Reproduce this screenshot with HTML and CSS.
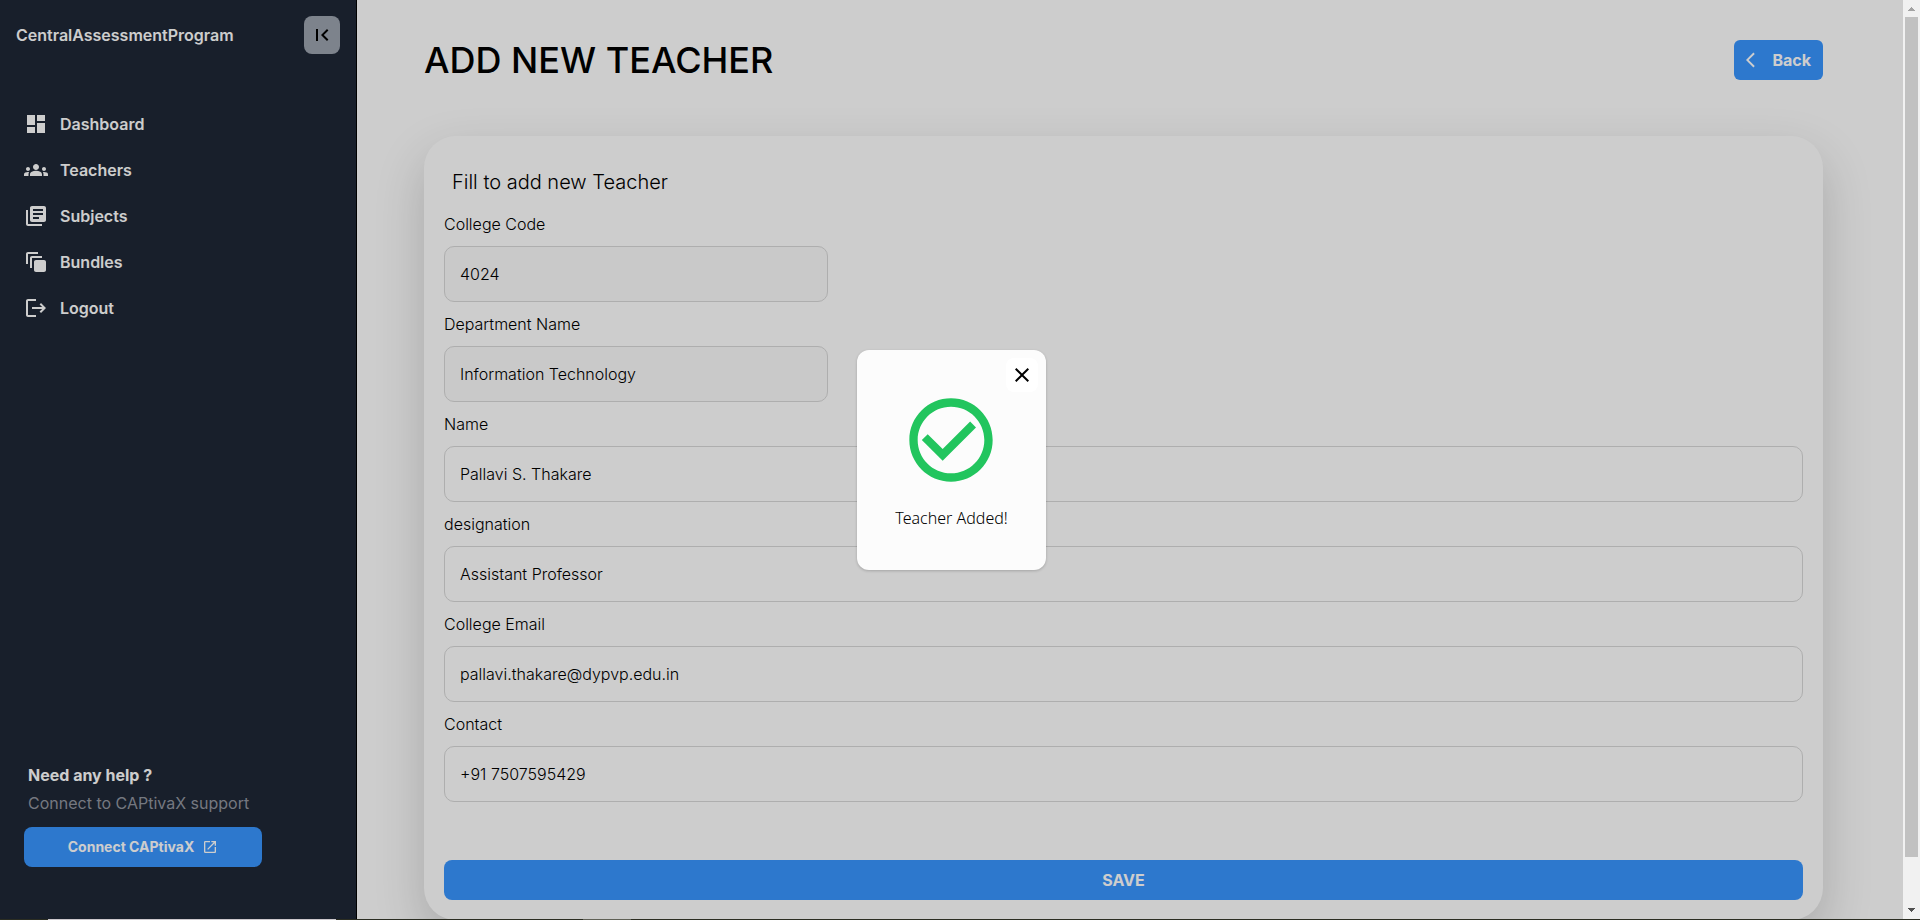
FILE: index.html
```
<!DOCTYPE html>
<html lang="en">
<head>
<meta charset="utf-8">
<title>Add New Teacher</title>
<link rel="stylesheet" href="styles.css">
</head>
<body>
<div class="screen">
  <div class="app">
    <aside class="sidebar">
      <div class="brand">
        <span class="brand-name">CentralAssessmentProgram</span>
        <button class="collapse" type="button" aria-label="Collapse sidebar">
          <svg class="icon" viewBox="0 0 24 24"><path d="M18.41 16.59 13.82 12l4.59-4.59L17 6l-6 6 6 6zM6 6h2v12H6z"/></svg>
        </button>
      </div>
      <nav class="nav">
        <a class="nav-link" href="#"><svg class="icon" viewBox="0 0 24 24"><path d="M3 13h8V3H3v10zm0 8h8v-6H3v6zm10 0h8V11h-8v10zm0-18v6h8V3h-8z"/></svg>Dashboard</a>
        <a class="nav-link" href="#"><svg class="icon" viewBox="0 0 24 24"><path d="M12 12.75c1.63 0 3.07.39 4.24.9 1.08.48 1.76 1.56 1.76 2.73V18H6v-1.61c0-1.18.68-2.26 1.76-2.73 1.17-.52 2.61-.91 4.24-.91zM4 13c1.1 0 2-.9 2-2s-.9-2-2-2-2 .9-2 2 .9 2 2 2zm1.13 1.1c-.37-.06-.74-.1-1.13-.1-.99 0-1.93.21-2.78.58A2.01 2.01 0 0 0 0 16.43V18h4.5v-1.61c0-.83.23-1.61.63-2.29zM20 13c1.1 0 2-.9 2-2s-.9-2-2-2-2 .9-2 2 .9 2 2 2zm4 3.43c0-.81-.48-1.53-1.22-1.85A6.95 6.95 0 0 0 20 14c-.39 0-.76.04-1.13.1.4.68.63 1.46.63 2.29V18H24v-1.57zM12 6c1.66 0 3 1.34 3 3s-1.34 3-3 3-3-1.34-3-3 1.34-3 3-3z"/></svg>Teachers</a>
        <a class="nav-link" href="#"><svg class="icon" viewBox="0 0 24 24"><path d="M4 6H2v14c0 1.1.9 2 2 2h14v-2H4V6zm16-4H8c-1.1 0-2 .9-2 2v12c0 1.1.9 2 2 2h12c1.1 0 2-.9 2-2V4c0-1.1-.9-2-2-2zm-1 9H9V9h10v2zm-4 4H9v-2h6v2zm4-8H9V5h10v2z"/></svg>Subjects</a>
        <a class="nav-link" href="#"><svg class="icon" viewBox="0 0 24 24"><path d="M14 2H4c-1.11 0-2 .9-2 2v10h2V4h10V2zm4 4H8c-1.11 0-2 .9-2 2v10h2V8h10V6zm2 4h-8c-1.11 0-2 .9-2 2v8c0 1.1.89 2 2 2h8c1.1 0 2-.9 2-2v-8c0-1.1-.9-2-2-2z"/></svg>Bundles</a>
        <a class="nav-link" href="#"><svg class="icon" viewBox="0 0 24 24"><path d="m17 7-1.41 1.41L18.17 11H8v2h10.17l-2.58 2.58L17 17l5-5zM4 5h8V3H4c-1.1 0-2 .9-2 2v14c0 1.1.9 2 2 2h8v-2H4V5z"/></svg>Logout</a>
      </nav>
      <div class="help">
        <p class="help-title">Need any help ?</p>
        <p class="help-text">Connect to CAPtivaX support</p>
        <button class="btn connect" type="button">Connect CAPtivaX
          <svg class="icon-small" viewBox="0 0 24 24"><path d="M19 19H5V5h7V3H5a2 2 0 0 0-2 2v14a2 2 0 0 0 2 2h14c1.1 0 2-.9 2-2v-7h-2v7zM14 3v2h3.59l-9.83 9.83 1.41 1.41L19 6.41V10h2V3h-7z"/></svg>
        </button>
      </div>
    </aside>
    <main class="main">
      <header class="page-head">
        <h1 class="title">ADD NEW TEACHER</h1>
        <button class="btn back" type="button">
          <svg class="icon-back" viewBox="0 0 24 24"><path d="M11.67 3.87 9.9 2.1 0 12l9.9 9.9 1.77-1.77L3.54 12z"/></svg>Back
        </button>
      </header>
      <form class="card">
        <h2 class="card-title">Fill to add new Teacher</h2>
        <div class="field"><label for="code">College Code</label><input class="short" id="code" type="text" value="4024" readonly></div>
        <div class="field"><label for="dept">Department Name</label><input class="short" id="dept" type="text" value="Information Technology" readonly></div>
        <div class="field"><label for="name">Name</label><input id="name" type="text" value="Pallavi S. Thakare"></div>
        <div class="field"><label for="designation">designation</label><input id="designation" type="text" value="Assistant Professor"></div>
        <div class="field"><label for="email">College Email</label><input id="email" type="email" value="pallavi.thakare@dypvp.edu.in"></div>
        <div class="field"><label for="contact">Contact</label><input id="contact" type="tel" value="+91 7507595429"></div>
        <button class="btn save" type="button">SAVE</button>
      </form>
    </main>
    <div class="overlay">
      <div class="modal" role="dialog" aria-labelledby="modal-text">
        <button class="close" type="button" aria-label="Close">
          <svg class="icon" viewBox="0 0 24 24"><path d="M19 6.41 17.59 5 12 10.59 6.41 5 5 6.41 10.59 12 5 17.59 6.41 19 12 13.41 17.59 19 19 17.59 13.41 12z"/></svg>
        </button>
        <svg class="check" viewBox="0 0 24 24"><path d="M16.59 7.58 10 14.17l-3.59-3.58L5 12l5 5 8-8zM12 2C6.48 2 2 6.48 2 12s4.48 10 10 10 10-4.48 10-10S17.52 2 12 2zm0 18c-4.42 0-8-3.58-8-8s3.58-8 8-8 8 3.58 8 8-3.58 8-8 8z"/></svg>
        <p class="modal-text" id="modal-text">Teacher Added!</p>
      </div>
    </div>
  </div>
  <div class="scrollbar">
    <svg class="arrow arrow-up" viewBox="0 0 17 17"><path d="M5 11h7v-1h-1V9h-1V8H9V7H8v1H7v1H6v1H5z"/></svg>
    <div class="thumb"></div>
    <svg class="arrow arrow-down" viewBox="0 0 17 17"><path d="M5 6h7v1h-1v1h-1v1H9v1H8V9H7V8H6V7H5z"/></svg>
  </div>
</div>
<div class="edge"></div>
</body>
</html>
```
FILE: styles.css
```
* { box-sizing: border-box; margin: 0; padding: 0; }

body {
  height: 100vh;
  display: flex;
  flex-direction: column;
  overflow: hidden;
  font-family: Inter, "Liberation Sans", sans-serif;
  font-size: 16px;
  line-height: 24px;
  color: #000;
}

button, input { font: inherit; color: inherit; }
button { border: 0; cursor: pointer; }

.screen { flex: 1; min-height: 0; display: flex; }
.app { flex: 1; min-width: 0; display: flex; position: relative; overflow: hidden; background: #fff; }

.icon { width: 24px; height: 24px; flex: none; fill: currentColor; }
.icon-small { width: 16px; height: 16px; fill: currentColor; }
.icon-back { width: 18px; height: 18px; fill: currentColor; }

.sidebar {
  flex: none;
  width: 357px;
  display: flex;
  flex-direction: column;
  border-right: 1px solid #000;
  background: #1e2736;
  color: #fff;
}
.brand { display: flex; align-items: center; justify-content: space-between; padding: 16px 16px 0; }
.brand-name { font-weight: 600; }
.collapse {
  display: flex;
  align-items: center;
  justify-content: center;
  width: 36px;
  height: 38px;
  border-radius: 8px;
  background: #9ca3af;
  color: #000;
}
.nav { display: flex; flex-direction: column; gap: 22px; padding: 58px 24px 0; }
.nav-link { display: flex; align-items: center; gap: 12px; color: inherit; font-weight: 600; text-decoration: none; }
.help { margin-top: auto; padding: 0 24px 52px; }
.help-title { padding-left: 4px; font-weight: 700; }
.help-text { padding: 4px 0 12px 4px; color: #9296a0; }

.btn {
  display: flex;
  align-items: center;
  justify-content: center;
  height: 40px;
  border-radius: 8px;
  background: #3996ff;
  color: #fff;
  font-weight: 700;
}
.connect { gap: 8px; width: 238px; font-size: 14px; }

.main { flex: 1; min-width: 0; padding: 40px 80px 0 67px; }
.page-head { display: flex; align-items: center; justify-content: space-between; margin-bottom: 56px; }
.title { font-size: 36px; line-height: 40px; font-weight: 500; }
.back { gap: 8px; padding: 0 12px; border-radius: 6px; }

.card {
  padding: 32px 20px 20px;
  border-radius: 32px;
  background: #fff;
  box-shadow: 0 20px 50px rgba(0, 0, 0, 0.18);
}
.card-title { padding: 0 8px; margin-bottom: 16px; font-size: 20px; line-height: 28px; font-weight: 300; }
.field { display: flex; flex-direction: column; gap: 10px; margin-bottom: 10px; font-weight: 300; }
.field input {
  width: 100%;
  height: 56px;
  padding: 0 15px;
  border: 1px solid #d9d9d9;
  border-radius: 10px;
  background: #fff;
  outline: 0;
}
.field .short { width: 384px; background: #fafafa; }
.save { width: 100%; margin-top: 58px; }

.overlay {
  position: absolute;
  inset: 0;
  display: flex;
  align-items: center;
  justify-content: center;
  background: rgba(0, 0, 0, 0.196);
}
.modal {
  position: relative;
  display: flex;
  flex-direction: column;
  align-items: center;
  gap: 16px;
  padding: 40px 38px;
  border-radius: 12px;
  background: #fcfcfc;
  box-shadow: 0 1px 3px rgba(0, 0, 0, 0.2);
}
.close {
  position: absolute;
  top: 8px;
  right: 8px;
  display: flex;
  align-items: center;
  justify-content: center;
  width: 32px;
  height: 34px;
  border-radius: 8px;
  background: #fff;
}
.check { width: 100px; height: 100px; fill: #22c55e; }
.modal-text { font-family: "Noto Sans", sans-serif; font-weight: 300; }

.scrollbar { flex: none; width: 17px; display: flex; flex-direction: column; align-items: center; background: #f1f1f1; }
.arrow { width: 17px; height: 17px; shape-rendering: crispEdges; }
.arrow-up { fill: #a3a3a3; }
.arrow-down { fill: #505050; }
.thumb { width: 13px; flex: 840 1 0; background: #c1c1c1; }
.scrollbar::after { content: ""; order: 1; flex: 45 1 0; }
.arrow-down { order: 2; }

.edge {
  flex: none;
  height: 1px;
  background: linear-gradient(90deg, #2b2d22 48px, #cdc8cd 48px, #cdc8cd 336px, #2b2d22 336px, #2b2d22 583px, #5f6056 583px, #5f6056 631px, #2b2d22 631px);
}
```
